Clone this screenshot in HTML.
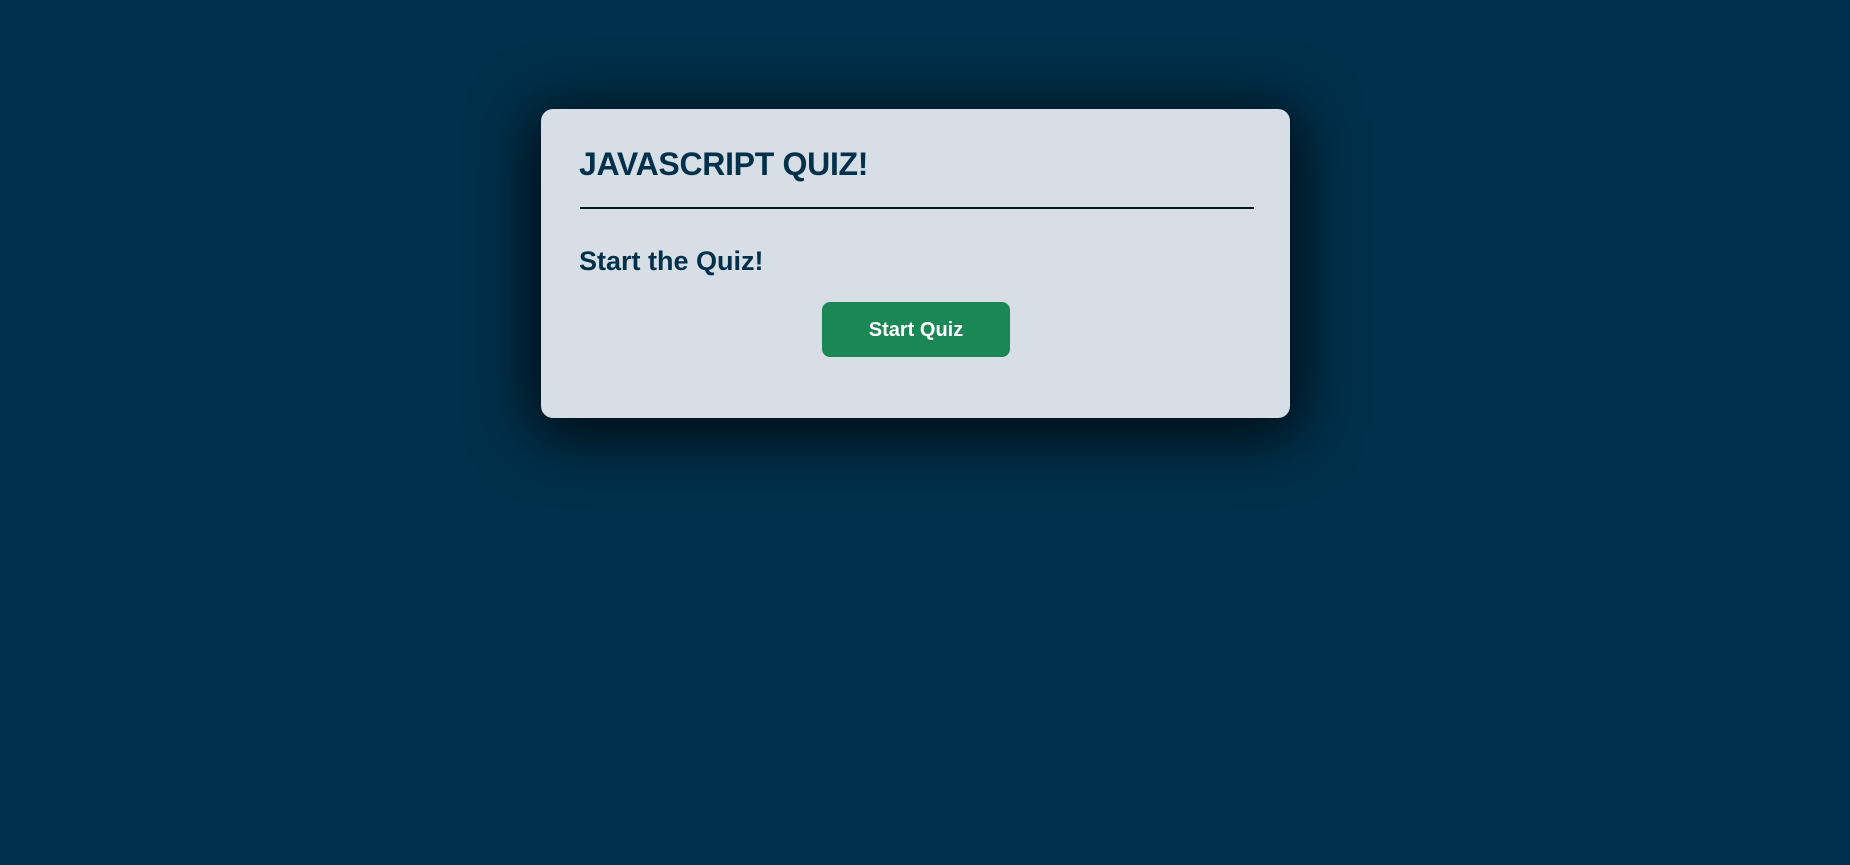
<!DOCTYPE html>
<html><head><meta charset="utf-8"><style>
html,body{margin:0;padding:0;width:1850px;height:865px;background:#00304b;overflow:hidden;font-family:"Liberation Sans",sans-serif;}
.card{position:absolute;left:541px;top:109px;width:749px;height:309px;background:#d7dee5;border-radius:12px;box-shadow:0 10px 60px 10px rgba(0,0,0,0.75);}
.t{position:absolute;left:38px;top:35px;font-size:32px;line-height:40px;font-weight:bold;color:#01304a;letter-spacing:-0.3px;white-space:nowrap;}
.hr{position:absolute;left:39px;top:98px;width:674px;height:2px;background:#04171c;}
.s{position:absolute;left:38px;top:136px;font-size:27px;line-height:32px;font-weight:bold;color:#01304a;white-space:nowrap;}
.b{position:absolute;left:281px;top:193px;width:188px;height:55px;background:#1b8754;border-radius:8px;color:#fff;font-weight:bold;font-size:20px;line-height:57px;text-align:center;}
</style></head><body>
<div class="card">
<div class="t">JAVASCRIPT QUIZ!</div>
<div class="hr"></div>
<div class="s">Start the Quiz!</div>
<div class="b">Start Quiz</div>
</div>
</body></html>
